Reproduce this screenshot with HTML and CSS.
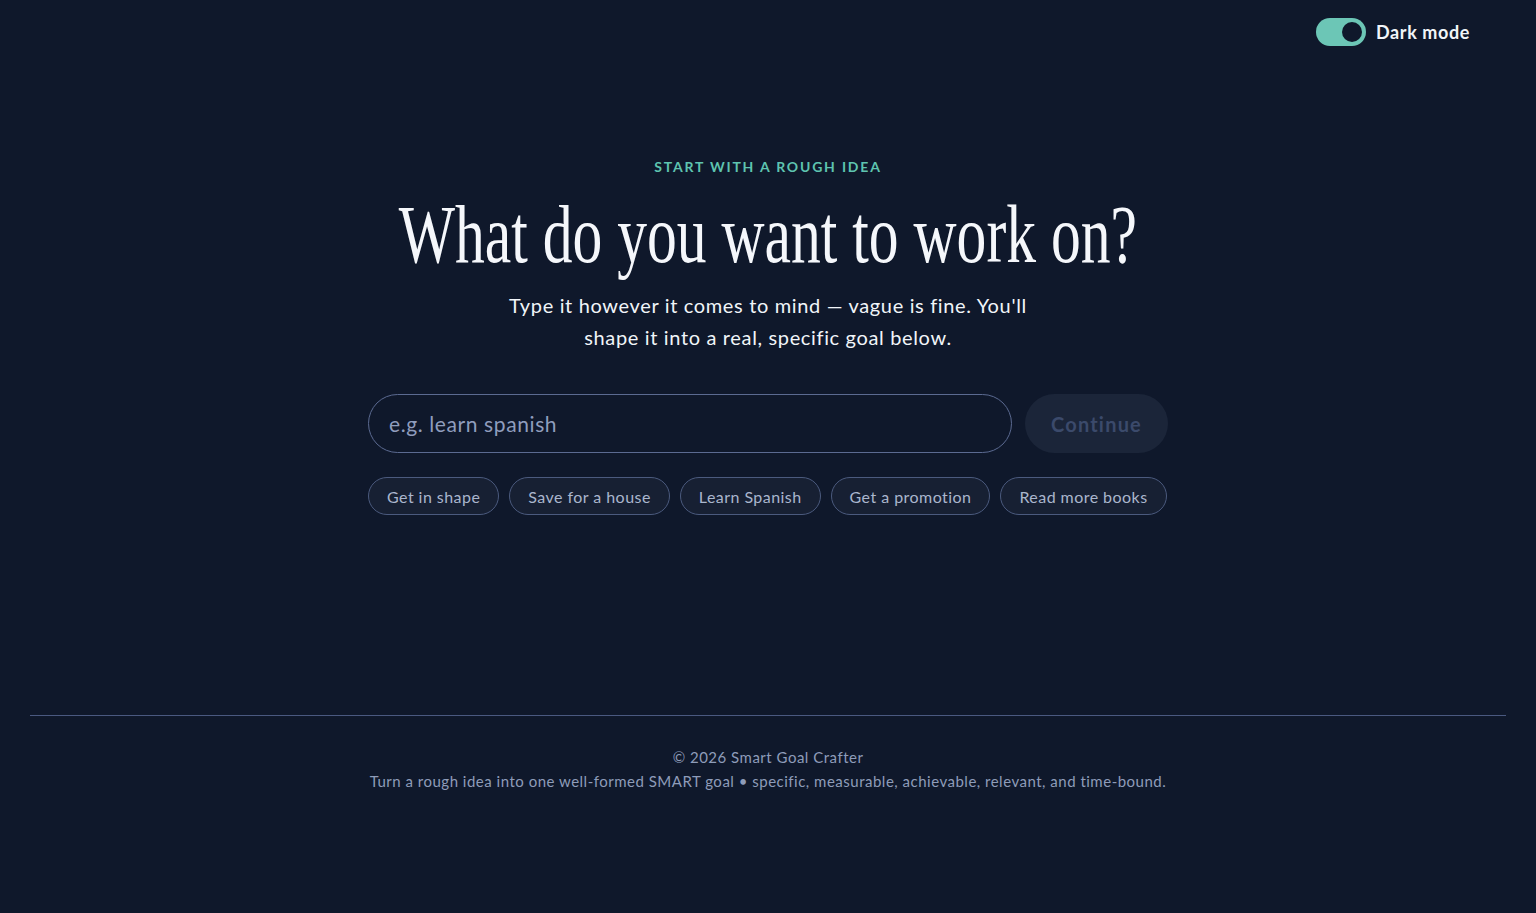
FILE: index.html
```html
<!DOCTYPE html>
<html lang="en">
<head>
<meta charset="utf-8">
<title>Smart Goal Crafter</title>
<link rel="stylesheet" href="styles.css">
</head>
<body>
<div class="page">
  <header class="topbar">
    <label class="toggle">
      <span class="track"><span class="knob"></span></span>
      <span class="toggle-label">Dark mode</span>
    </label>
  </header>
  <main class="hero">
    <p class="eyebrow">START WITH A ROUGH IDEA</p>
    <h1 class="title"><span class="title-inner">What do you want to work on?</span></h1>
    <p class="lede">Type it however it comes to mind — vague is fine. You'll shape it into a real, specific goal below.</p>
    <form class="entry">
      <div class="field"><span class="placeholder">e.g. learn spanish</span></div>
      <button type="button" class="continue">Continue</button>
    </form>
    <div class="chips">
      <button type="button" class="chip">Get in shape</button>
      <button type="button" class="chip">Save for a house</button>
      <button type="button" class="chip">Learn Spanish</button>
      <button type="button" class="chip">Get a promotion</button>
      <button type="button" class="chip">Read more books</button>
    </div>
  </main>
  <footer class="footer">
    <p class="copy">© 2026 Smart Goal Crafter</p>
    <p class="tagline">Turn a rough idea into one well-formed SMART goal • specific, measurable, achievable, relevant, and time-bound.</p>
  </footer>
</div>
</body>
</html>
```
FILE: styles.css
```css
* { box-sizing: border-box; }
html, body { margin: 0; padding: 0; }
body {
  background: #0f182b;
  color: #f1f5f9;
  font-family: "Lato", "Noto Sans", sans-serif;
  min-height: 913px;
}
.page {
  min-height: 913px;
  display: flex;
  flex-direction: column;
}
.topbar {
  display: flex;
  justify-content: flex-end;
  padding: 18px 66px 0 0;
}
.toggle {
  display: flex;
  align-items: center;
  gap: 10px;
}
.track {
  width: 50px;
  height: 28px;
  border-radius: 14px;
  background: #6cc6b6;
  display: flex;
  align-items: center;
  justify-content: flex-end;
  padding: 0 4px;
}
.knob {
  width: 20px;
  height: 20px;
  border-radius: 50%;
  background: #0f182b;
}
.toggle-label {
  font-size: 18px;
  font-weight: 700;
  letter-spacing: 0.6px;
  color: #f1f5f9;
}
.hero {
  display: flex;
  flex-direction: column;
  align-items: center;
  padding-top: 112px;
}
.eyebrow {
  margin: 0;
  font-size: 14px;
  font-weight: 700;
  letter-spacing: 1.8px;
  color: #5ec4b0;
  line-height: 18px;
}
.title {
  margin: 16px 0 0;
  font-family: "Liberation Serif", serif;
  font-weight: 400;
  font-size: 82px;
  line-height: 86px;
  color: #f5f7fb;
  text-align: center;
  white-space: nowrap;
}
.title-inner {
  display: inline-block;
  transform: scaleX(0.727);
}
.lede {
  margin: 11px 0 0;
  max-width: 540px;
  text-align: center;
  font-size: 20px;
  letter-spacing: 0.65px;
  line-height: 32px;
  color: #f1f5f9;
}
.entry {
  margin-top: 41px;
  width: 800px;
  display: flex;
  gap: 13px;
}
.field {
  flex: 1;
  height: 59px;
  border: 1px solid #5b6a91;
  border-radius: 30px;
  display: flex;
  align-items: center;
  padding: 0 20px;
}
.placeholder {
  font-size: 21px;
  letter-spacing: 0.6px;
  color: #8f9dbd;
}
.continue {
  width: 143px;
  height: 59px;
  border: none;
  border-radius: 30px;
  background: #1b2539;
  color: #3b4a6b;
  font-family: inherit;
  font-size: 20px;
  font-weight: 700;
  letter-spacing: 1.2px;
}
.chips {
  margin-top: 24px;
  width: 800px;
  display: flex;
  gap: 10px;
}
.chip {
  height: 38px;
  padding: 0 18px;
  border: 1px solid #4b5a7e;
  border-radius: 19px;
  background: #172033;
  color: #aab6cd;
  font-family: inherit;
  font-size: 16px;
  letter-spacing: 0.45px;
}
.footer {
  margin: auto 30px 0;
  border-top: 1px solid #4a5980;
  padding: 29px 0 120px;
  text-align: center;
  color: #8e9cb9;
  font-size: 15px;
  letter-spacing: 0.5px;
  line-height: 24px;
}
.footer p { margin: 0; }
```
